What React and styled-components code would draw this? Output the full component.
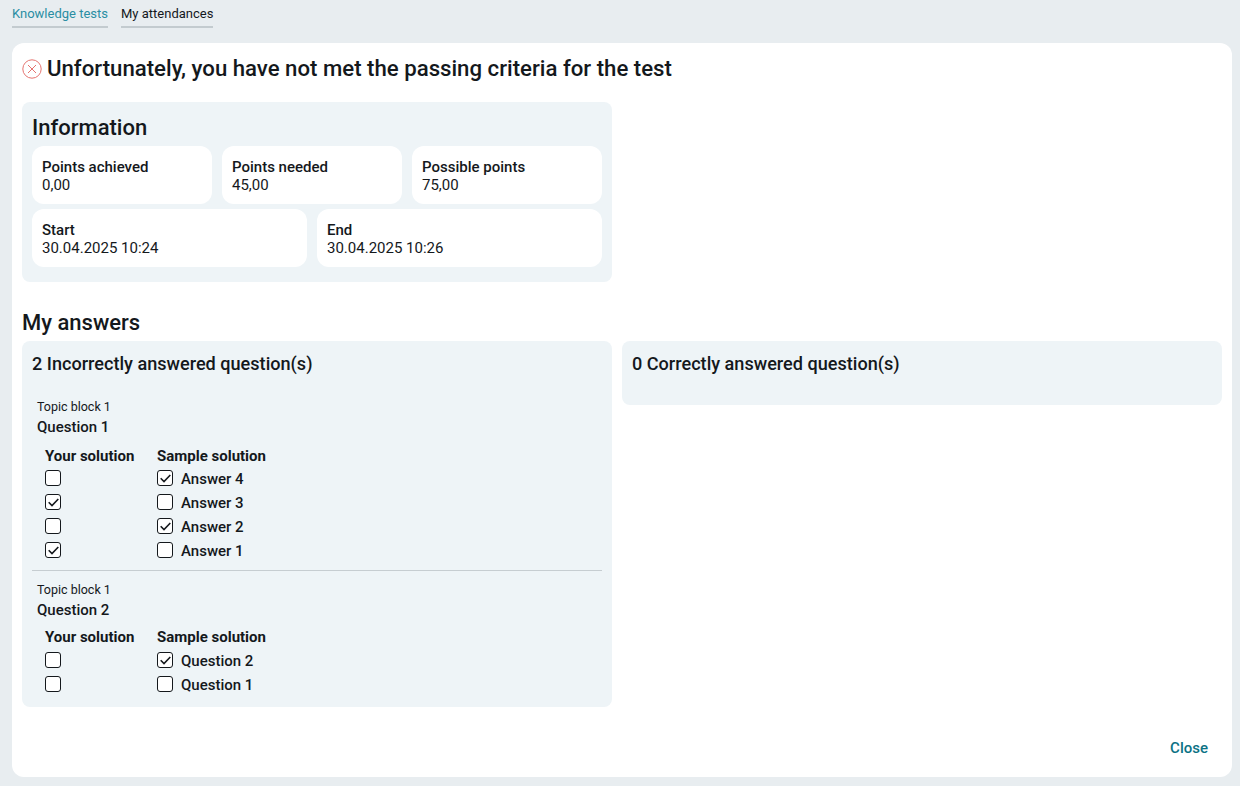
import React from 'react';
import styled, { createGlobalStyle } from 'styled-components';

const GlobalStyle = createGlobalStyle`
  html, body {
    margin: 0;
    padding: 0;
    background: #e8edf0;
    font-family: Roboto, sans-serif;
    color: #14181c;
  }
  * { box-sizing: border-box; }
`;

const Page = styled.div`
  width: 1240px;
  height: 786px;
  padding: 0 8px 9px 12px;
  display: flex;
  flex-direction: column;
  overflow: hidden;
`;

const Tabs = styled.nav`
  display: flex;
  gap: 13px;
  height: 43px;
  padding-top: 6px;
  align-items: flex-start;
`;

const Tab = styled.a`
  display: block;
  height: 22px;
  font-size: 13px;
  line-height: 16px;
  border-bottom: 2px solid #c3cbcf;
  color: ${p => (p.$active ? '#2a8ea3' : '#14181c')};
`;

const Card = styled.main`
  flex: 1;
  background: #fff;
  border-radius: 12px;
  padding: 10px;
  display: flex;
  flex-direction: column;
`;

const Title = styled.div`
  display: flex;
  align-items: center;
  gap: 5px;
  height: 30px;
  margin-bottom: 19px;
  font-size: 22.2px;
  line-height: 32px;
  font-weight: 500;
`;

const Panel = styled.section`
  width: ${p => p.$width || 'auto'};
  background: #eef4f7;
  border-radius: 8px;
  padding: 10px 10px ${p => p.$bottom || '10px'};
`;

const InfoHeading = styled.h2`
  margin: 0 0 2px;
  font-size: 22px;
  line-height: 32px;
  font-weight: 500;
`;

const InfoRow = styled.div`
  display: grid;
  grid-template-columns: ${p => p.$cols};
  gap: 10px;
  & + & { margin-top: 5px; }
`;

const InfoCell = styled.div`
  height: 58px;
  background: #fff;
  border-radius: 12px;
  padding: 12px 10px 0;
  font-size: 15px;
  line-height: 18px;
`;

const InfoLabel = styled.div`
  font-weight: 500;
`;

const AnswersHeading = styled.h2`
  margin: 26px 0 4px;
  font-size: 22px;
  line-height: 29px;
  font-weight: 500;
`;

const Columns = styled.div`
  display: grid;
  grid-template-columns: 590px 600px;
  gap: 10px;
  align-items: start;
`;

const PanelHeading = styled.h3`
  margin: 0;
  font-size: 18.1px;
  line-height: 26px;
  font-weight: 500;
`;

const Question = styled.div`
  padding-top: ${p => (p.$first ? '22px' : '11px')};
  & + & {
    border-top: 1px solid #c6cdd1;
    margin-top: 8px;
    padding-bottom: 1px;
  }
`;

const Topic = styled.div`
  margin-left: 5px;
  font-size: 12.5px;
  line-height: 16px;
`;

const QuestionName = styled.div`
  margin: 3px 0 ${p => (p.$first ? '10px' : '8px')} 5px;
  font-size: 15px;
  line-height: 18px;
  font-weight: 500;
`;

const SolutionGrid = styled.div`
  display: grid;
  grid-template-columns: 112px auto;
  justify-content: start;
  padding-left: 13px;
  font-size: 15px;
`;

const ColHead = styled.div`
  height: ${p => (p.$first ? '20px' : '21px')};
  line-height: 20px;
  font-weight: 700;
  font-size: 15px;
`;

const CheckCell = styled.div`
  display: flex;
  align-items: center;
  gap: 8px;
  height: 24px;
  font-weight: 500;
  font-size: 15px;
`;

const AnswerLabel = styled.span`
  padding-top: 2px;
`;

const Box = styled.span`
  width: 16px;
  height: 16px;
  border: 1.6px solid #14181c;
  border-radius: 3px;
  background: #fff;
  display: inline-flex;
  align-items: center;
  justify-content: center;
`;

const Footer = styled.div`
  margin-top: auto;
  display: flex;
  justify-content: flex-end;
  padding: 0 14px 10px 0;
`;

const CloseButton = styled.button`
  border: 0;
  padding: 0;
  background: none;
  font: 500 15px/18px Roboto, sans-serif;
  color: #0b7285;
`;

const FailSvg = styled.svg`
  margin-top: 1px;
  flex: none;
`;

const Check = ({ on }) => (
  <Box>
    {on && (
      <svg width="11" height="9" viewBox="0 0 11 9" fill="none">
        <path d="M0.7 4.2 L4 7.5 L10.3 1" stroke="#14181c" strokeWidth="1.6" />
      </svg>
    )}
  </Box>
);

const FailIcon = () => (
  <FailSvg width="20" height="20" viewBox="0 0 20 20" fill="none" stroke="#e5736f" strokeWidth="1">
    <circle cx="10" cy="10" r="9.2" />
    <path d="M6 6 L14 14 M14 6 L6 14" />
  </FailSvg>
);

const questions = [
  {
    name: 'Question 1',
    rows: [
      { label: 'Answer 4', mine: false, sample: true },
      { label: 'Answer 3', mine: true, sample: false },
      { label: 'Answer 2', mine: false, sample: true },
      { label: 'Answer 1', mine: true, sample: false },
    ],
  },
  {
    name: 'Question 2',
    rows: [
      { label: 'Question 2', mine: false, sample: true },
      { label: 'Question 1', mine: false, sample: false },
    ],
  },
];

const Info = ({ label, value }) => (
  <InfoCell>
    <InfoLabel>{label}</InfoLabel>
    <div>{value}</div>
  </InfoCell>
);

export default function App() {
  return (
    <Page>
      <GlobalStyle />
      <Tabs>
        <Tab $active>Knowledge tests</Tab>
        <Tab>My attendances</Tab>
      </Tabs>
      <Card>
        <Title>
          <FailIcon />
          Unfortunately, you have not met the passing criteria for the test
        </Title>
        <Panel $width="590px" $bottom="15px">
          <InfoHeading>Information</InfoHeading>
          <InfoRow $cols="180px 180px 1fr">
            <Info label="Points achieved" value="0,00" />
            <Info label="Points needed" value="45,00" />
            <Info label="Possible points" value="75,00" />
          </InfoRow>
          <InfoRow $cols="275px 1fr">
            <Info label="Start" value="30.04.2025 10:24" />
            <Info label="End" value="30.04.2025 10:26" />
          </InfoRow>
        </Panel>
        <AnswersHeading>My answers</AnswersHeading>
        <Columns>
          <Panel>
            <PanelHeading>2 Incorrectly answered question(s)</PanelHeading>
            {questions.map((q, i) => (
              <Question key={q.name} $first={i === 0}>
                <Topic>Topic block 1</Topic>
                <QuestionName $first={i === 0}>{q.name}</QuestionName>
                <SolutionGrid>
                  <ColHead $first={i === 0}>Your solution</ColHead>
                  <ColHead $first={i === 0}>Sample solution</ColHead>
                  {q.rows.map(r => (
                    <React.Fragment key={r.label}>
                      <CheckCell><Check on={r.mine} /></CheckCell>
                      <CheckCell>
                        <Check on={r.sample} />
                        <AnswerLabel>{r.label}</AnswerLabel>
                      </CheckCell>
                    </React.Fragment>
                  ))}
                </SolutionGrid>
              </Question>
            ))}
          </Panel>
          <Panel $bottom="28px">
            <PanelHeading>0 Correctly answered question(s)</PanelHeading>
          </Panel>
        </Columns>
        <Footer>
          <CloseButton>Close</CloseButton>
        </Footer>
      </Card>
    </Page>
  );
}
